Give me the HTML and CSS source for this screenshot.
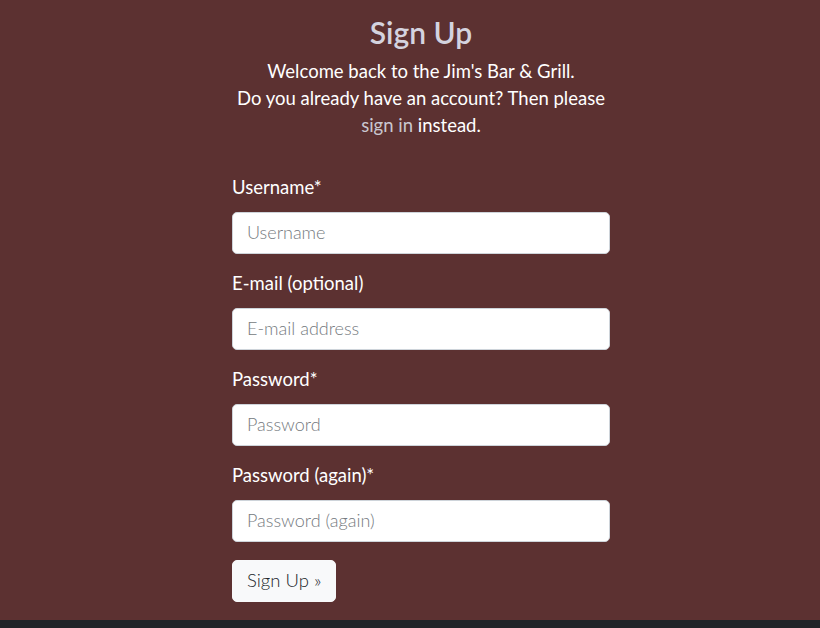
FILE: index.html
```html
<!DOCTYPE html>
<html lang="en">
<head>
<meta charset="utf-8">
<title>Sign Up</title>
<link rel="stylesheet" href="styles.css">
</head>
<body>
<main class="page">
  <section class="signup">
    <h1 class="title">Sign Up</h1>
    <p class="intro">Welcome back to the Jim's Bar &amp; Grill.<br>Do you already have an account? Then please<br><a class="link" href="#">sign in</a> instead.</p>
    <form class="form">
      <div class="field">
        <label class="label" for="u">Username*</label>
        <input class="input" id="u" type="text" placeholder="Username">
      </div>
      <div class="field">
        <label class="label" for="e">E-mail (optional)</label>
        <input class="input" id="e" type="email" placeholder="E-mail address">
      </div>
      <div class="field">
        <label class="label" for="p1">Password*</label>
        <input class="input" id="p1" type="password" placeholder="Password">
      </div>
      <div class="field">
        <label class="label" for="p2">Password (again)*</label>
        <input class="input" id="p2" type="password" placeholder="Password (again)">
      </div>
      <button class="btn" type="submit">Sign Up &raquo;</button>
    </form>
  </section>
</main>
<footer class="footer"></footer>
</body>
</html>
```
FILE: styles.css
```css
html, body {
  margin: 0;
  padding: 0;
  height: 100%;
}
body {
  background: #5c3131;
  font-family: Lato, "Open Sans", sans-serif;
  color: #ffffff;
  display: flex;
  flex-direction: column;
}
.page {
  flex: 1;
  display: flex;
  justify-content: center;
  padding-left: 22px;
}
.signup {
  width: 378px;
  display: flex;
  flex-direction: column;
}
.title {
  margin: 14px 0 0;
  text-align: center;
  font-size: 30px;
  font-weight: 600;
  color: #d4d3df;
  line-height: 36px;
}
.intro {
  margin: 8px -30px 0;
  text-align: center;
  font-size: 18.5px;
  line-height: 27px;
}
.link {
  color: #c9c7cf;
  text-decoration: none;
}
.form {
  margin-top: 34px;
  display: flex;
  flex-direction: column;
  gap: 15px;
}
.field {
  display: flex;
  flex-direction: column;
  gap: 11px;
}
.label {
  font-size: 18.5px;
  line-height: 28px;
}
.input {
  box-sizing: border-box;
  width: 100%;
  height: 42px;
  border: 1px solid #ced4da;
  border-radius: 5px;
  padding: 0 14px 3px;
  font-family: inherit;
  font-size: 18px;
  font-weight: 300;
  background: #fff;
}
.input::placeholder {
  color: #757a80;
}
.btn {
  align-self: flex-start;
  margin-top: 3px;
  height: 42px;
  padding: 0 14px 2px;
  border: 1px solid #f8f9fa;
  border-radius: 5px;
  background: #f8f9fa;
  color: #212529;
  font-family: inherit;
  font-size: 18.5px;
  font-weight: 300;
}
.footer {
  height: 8px;
  background: #212529;
}
```
